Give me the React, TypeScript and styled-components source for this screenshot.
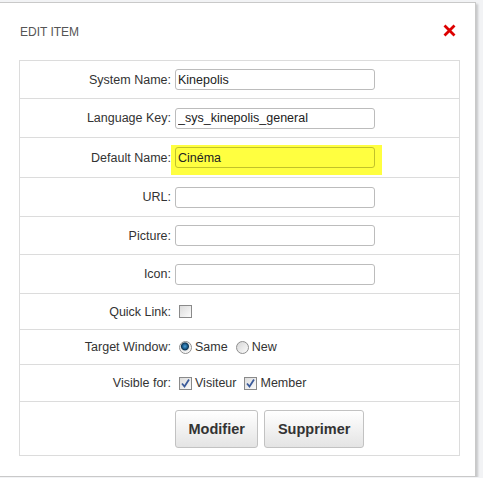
import styled, { createGlobalStyle } from "styled-components";
import { ReactNode } from "react";

const Global = createGlobalStyle`
  html, body {
    margin: 0;
    padding: 0;
    background: #f2f3f5;
    font-family: "Liberation Sans", Arial, sans-serif;
  }
`;

type FieldRow = {
  label: string;
  h: number;
  field: ReactNode;
};

function Check({ checked }: { checked?: boolean }) {
  return (
    <Box>
      {checked && (
        <svg width="11" height="11" viewBox="0 0 11 11">
          <path d="M2 5.5 L4.5 8.5 L9 1.5" fill="none" stroke="#3a5a9a" strokeWidth="1.8" />
        </svg>
      )}
    </Box>
  );
}

export default function App() {
  const rows: FieldRow[] = [
    { label: "System Name:", h: 38, field: <TextInput defaultValue="Kinepolis" /> },
    { label: "Language Key:", h: 39, field: <TextInput defaultValue="_sys_kinepolis_general" /> },
    {
      label: "Default Name:",
      h: 40,
      field: (
        <Highlight>
          <TextInput $hl defaultValue="Cinéma" />
        </Highlight>
      ),
    },
    { label: "URL:", h: 39, field: <TextInput /> },
    { label: "Picture:", h: 38, field: <TextInput /> },
    { label: "Icon:", h: 39, field: <TextInput /> },
    {
      label: "Quick Link:",
      h: 36,
      field: (
        <Options>
          <Check />
        </Options>
      ),
    },
    {
      label: "Target Window:",
      h: 35,
      field: (
        <Options>
          <Option>
            <Radio $on />
            Same
          </Option>
          <Option>
            <Radio />
            New
          </Option>
        </Options>
      ),
    },
    {
      label: "Visible for:",
      h: 37,
      field: (
        <Options>
          <Option>
            <Check checked />
            Visiteur
          </Option>
          <Option>
            <Check checked />
            Member
          </Option>
        </Options>
      ),
    },
  ];

  return (
    <>
      <Global />
      <Modal>
        <Header>
          <Title>EDIT ITEM</Title>
          <Close aria-label="close">
            <svg width="13" height="13" viewBox="0 0 13 13">
              <path d="M1.5 1.5 L11.5 11.5 M11.5 1.5 L1.5 11.5" stroke="#dd0000" strokeWidth="2.8" />
            </svg>
          </Close>
        </Header>
        <Table>
          {rows.map((r) => (
            <Row key={r.label} $h={r.h}>
              <Label>{r.label}</Label>
              <Field>{r.field}</Field>
            </Row>
          ))}
          <Row $h={54}>
            <Label />
            <Field>
              <Buttons>
                <Button>Modifier</Button>
                <Button>Supprimer</Button>
              </Buttons>
            </Field>
          </Row>
        </Table>
      </Modal>
    </>
  );
}

/* styles */
const Modal = styled.div`
  box-sizing: border-box;
  width: 477px;
  height: 475px;
  margin: 2px 0 0 -1px;
  padding: 0 16px 0 19px;
  background: #fff;
  border: 1px solid #c9c9c9;
  box-shadow: 2px 2px 2px rgba(0, 0, 0, 0.18);
`;

const Header = styled.div`
  height: 57px;
  display: flex;
  align-items: center;
  justify-content: space-between;
  padding-right: 3px;
`;

const Title = styled.div`
  font-size: 12px;
  color: #555;
  padding: 1px 0 0 1px;
`;

const Close = styled.button`
  border: 0;
  background: none;
  padding: 0;
  margin-top: -3px;
  display: flex;
  cursor: pointer;
`;

const Table = styled.div`
  width: 441px;
  box-sizing: border-box;
  border: 1px solid #dcdcdc;
  border-bottom: 0;
`;

const Row = styled.div<{ $h: number }>`
  box-sizing: border-box;
  height: ${(p) => p.$h}px;
  display: grid;
  grid-template-columns: 155px 1fr;
  align-items: center;
  border-bottom: 1px solid #dcdcdc;
`;

const Label = styled.div`
  text-align: right;
  padding-right: 4px;
  font-size: 12.5px;
  color: #333;
`;

const Field = styled.div`
  display: flex;
  align-items: center;
`;

const TextInput = styled.input<{ $hl?: boolean }>`
  box-sizing: border-box;
  width: 200px;
  height: 21px;
  padding: 0 2px;
  border: 1px solid ${(p) => (p.$hl ? "#c2c22a" : "#bcbcbc")};
  border-radius: 3px;
  background: ${(p) => (p.$hl ? "#ffff40" : "#fff")};
  font-family: "Liberation Sans", Arial, sans-serif;
  font-size: 12.5px;
  color: #222;
  outline: none;
`;

const Highlight = styled.div`
  margin: 5px 0 0 -4px;
  padding: 2px 7px 7px 4px;
  background: #ffff40;
`;

const Options = styled.div`
  display: flex;
  align-items: center;
  gap: 8px;
  padding-left: 4px;
  font-size: 12.5px;
  color: #333;
`;

const Option = styled.label`
  display: flex;
  align-items: center;
  gap: 3px;
`;

const Box = styled.span`
  box-sizing: border-box;
  width: 13px;
  height: 13px;
  border: 1px solid #8a8a8a;
  background: linear-gradient(135deg, #dcdcdc, #fbfbfb);
  display: inline-flex;
  align-items: center;
  justify-content: center;
`;

const Radio = styled.span<{ $on?: boolean }>`
  box-sizing: border-box;
  width: 13px;
  height: 13px;
  border-radius: 50%;
  border: 1px solid #8e8e8e;
  background: ${(p) =>
    p.$on
      ? "radial-gradient(circle at 45% 40%, #4aa0d8 0, #1a5a8a 2.5px, #0c3350 3.5px, #e8e8e8 4.5px, #f8f8f8 6px)"
      : "linear-gradient(135deg, #d6d6d6, #fbfbfb)"};
`;

const Buttons = styled.div`
  display: flex;
  gap: 6px;
`;

const Button = styled.button`
  height: 38px;
  padding: 0 12.5px;
  border: 1px solid #c2c2c2;
  border-radius: 3px;
  background: linear-gradient(#ffffff, #e4e4e4);
  font-family: "Liberation Sans", Arial, sans-serif;
  font-weight: bold;
  font-size: 14.5px;
  color: #333;
  cursor: pointer;
`;
